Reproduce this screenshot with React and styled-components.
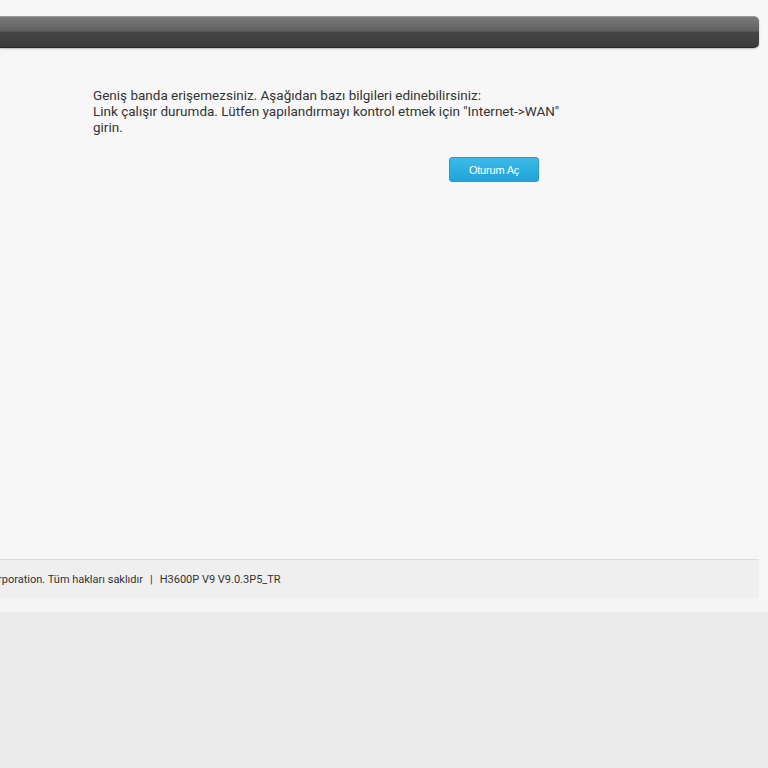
import React from 'react';
import styled, { createGlobalStyle } from 'styled-components';

const GlobalStyle = createGlobalStyle`
  html, body {
    margin: 0;
    padding: 0;
    height: 100%;
    overflow: hidden;
    background: #ebebeb;
    font-family: Roboto, "Liberation Sans", Arial, sans-serif;
  }
`;

const Page = styled.div`
  display: flex;
  flex-direction: column;
  width: 768px;
  height: 768px;
`;

const Main = styled.div`
  background: #f7f7f7;
  padding-top: 16px;
  padding-right: 9px;
`;

const HeaderBar = styled.div`
  height: 32px;
  box-sizing: border-box;
  border-radius: 0 5px 5px 0;
  border-top: 1px solid #9c9c9c;
  border-bottom: 1px solid #262626;
  background: linear-gradient(
    to bottom,
    #7a7a7a 0%,
    #626262 45%,
    #454545 52%,
    #3a3a3a 100%
  );
  box-shadow: 0 1px 2px rgba(0, 0, 0, 0.25);
`;

const Content = styled.div`
  height: 511px;
  padding: 39px 0 0 93px;
  box-sizing: border-box;
`;

const Message = styled.p`
  margin: 0;
  width: 474px;
  font-size: 13.5px;
  line-height: 16px;
  color: #333;
`;

const ButtonRow = styled.div`
  width: 446px;
  display: flex;
  justify-content: flex-end;
  margin-top: 22px;
`;

const LoginButton = styled.button`
  width: 90px;
  height: 25px;
  border: 1px solid #1e9bd0;
  border-radius: 3px;
  background: linear-gradient(to bottom, #3dbbe8 0%, #20a3da 100%);
  color: #fff;
  font-family: "Liberation Sans", Arial, sans-serif;
  font-size: 11px;
  letter-spacing: -0.2px;
  cursor: pointer;
`;

const Footer = styled.div`
  height: 39px;
  box-sizing: border-box;
  border-top: 1px solid #dcdcdc;
  background: #efefef;
  display: flex;
  align-items: center;
  font-size: 11px;
  color: #333;
  white-space: nowrap;
`;

const Copyright = styled.span`
  width: 143px;
  display: flex;
  justify-content: flex-end;
  overflow: hidden;
`;

const Separator = styled.span`
  margin: 0 7px 0 7px;
`;

const Strip = styled.div`
  height: 14px;
  background: #f5f5f5;
`;

const Bottom = styled.div`
  flex: 1;
  background: #ebebeb;
`;

export default function App() {
  return (
    <>
      <GlobalStyle />
      <Page>
        <Main>
          <HeaderBar />
          <Content>
            <Message>
              Geniş banda erişemezsiniz. Aşağıdan bazı bilgileri edinebilirsiniz:
              <br />
              Link çalışır durumda. Lütfen yapılandırmayı kontrol etmek için "Internet-&gt;WAN" girin.
            </Message>
            <ButtonRow>
              <LoginButton>Oturum Aç</LoginButton>
            </ButtonRow>
          </Content>
          <Footer>
            <Copyright>
              <span>© 2021 ZTE Corporation. Tüm hakları saklıdır</span>
            </Copyright>
            <Separator>|</Separator>
            <span>H3600P V9 V9.0.3P5_TR</span>
          </Footer>
        </Main>
        <Strip />
        <Bottom />
      </Page>
    </>
  );
}
